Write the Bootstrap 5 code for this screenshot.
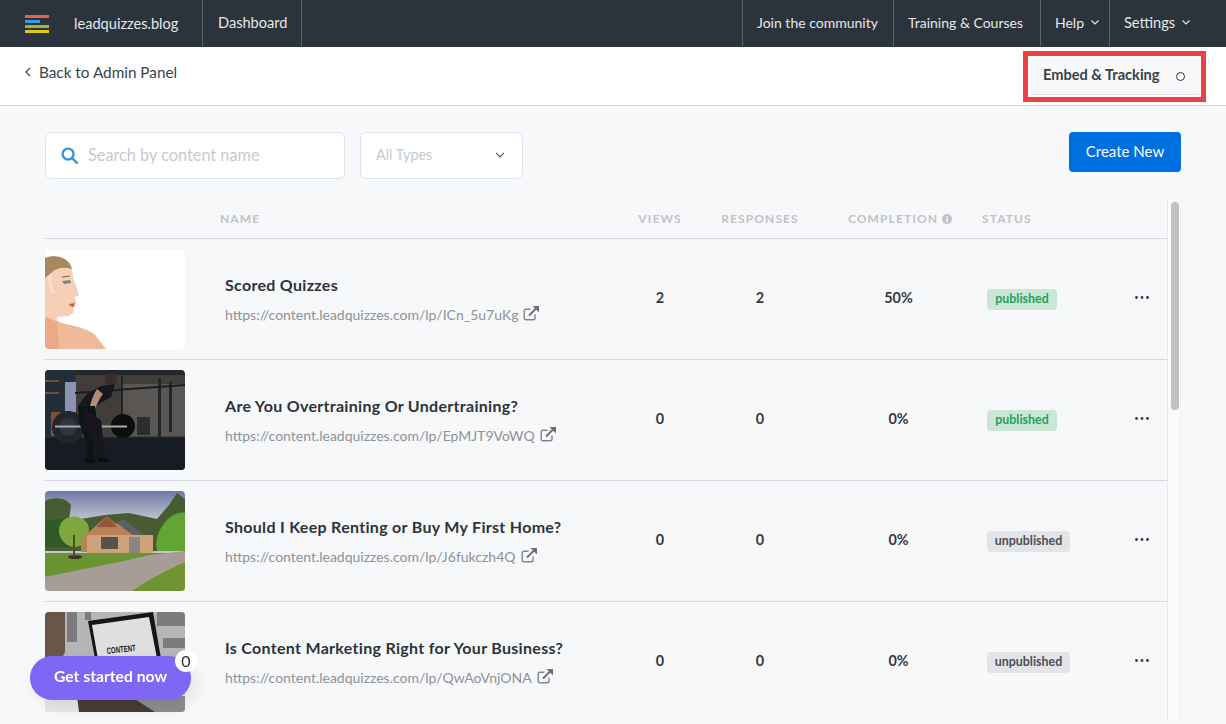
<!DOCTYPE html>
<html lang="en">
<head>
    <meta charset="UTF-8">
    <meta name="viewport" content="width=device-width, initial-scale=1.0">
    <title>LeadQuizzes Dashboard</title>
    <link href="https://cdn.jsdelivr.net/npm/bootstrap@5.3.2/dist/css/bootstrap.min.css" rel="stylesheet">
    <style>
        html, body { height: 100%; overflow: hidden; }
        body { font-family: "Lato", "Liberation Sans", sans-serif; background: #f7f8fa; color: #2b333c; font-size: 15px; }
        .lq-top { background: #2b333c; height: 47px; padding: 0; }
        .lq-brand { width: 203px; padding-left: 25px; gap: 25px; border-right: 1px solid #59616a; height: 47px; }
        .lq-logo { width: 24px; height: 18px; flex: none; }
        .lq-link { color: #e6e8ea; font-size: 14px; padding: 0 0 2px 14px; height: 47px; display: flex; align-items: center; text-decoration: none; border-right: 1px solid #59616a; white-space: nowrap; }
        .lq-link:hover { color: #fff; }
        .lq-wide { font-size: 14.6px; }
        .lq-w-dash { width: 99px; padding-left: 15px; }
        .lq-w-join { width: 152px; border-left: 1px solid #59616a; }
        .lq-w-train { width: 147px; }
        .lq-w-help { width: 69px; }
        .lq-w-set { width: 116px; border-right: 0; }
        .lq-caret { margin-left: 7px; }
        .lq-sub { background: #fff; height: 59px; border-bottom: 1px solid #d5dae0; padding: 15px 25px 0 25px; }
        .lq-back { color: #39424c; font-size: 15.3px; text-decoration: none; line-height: 20px; }
        .lq-embed { width: 172px; height: 38px; margin-top: -5px; background: #f7f8fa; border-radius: 4px; border-bottom: 1px solid #dfe2e6; padding: 0 14px 2px; font-size: 14.6px; font-weight: 700; color: #3a4047; }
        .lq-dot { width: 9px; height: 9px; border: 1px solid #2b333c; border-radius: 50%; background: #fff; margin: 3px 2px 0 0; }
        .lq-mark { position: absolute; left: 1023px; top: 51px; width: 183px; height: 51px; border: 5px solid #ef3e44; pointer-events: none; }
        .lq-tools { padding: 26px 45px 0; height: 94px; }
        .lq-search { width: 300px; height: 47px; background: #fff; border: 1px solid #dbe3ee; border-radius: 6px; padding-left: 15px; gap: 10px; }
        .lq-search input { border: 0; outline: 0; padding: 0; background: none; font-size: 16.3px; width: 240px; color: #2b333c; }
        .lq-search input::placeholder { color: #c6cad0; opacity: 1; }
        .lq-type { width: 163px; height: 47px; margin-left: 15px; background: #fff; border: 1px solid #dbe3ee; border-radius: 6px; padding: 0 17px 1px 15px; color: #c6cad0; font-size: 14.4px; }
        .lq-create { width: 112px; height: 40px; background: #0070e0; border: 0; border-radius: 4px; color: #fff; font-size: 15px; padding: 0 0 2px; }
        .lq-create:hover { background: #0063c7; color: #fff; }
        .lq-list { margin-left: 45px; width: 1136px; }
        .lq-rows { width: 1122px; }
        .lq-head { height: 39px; padding-bottom: 10px; border-bottom: 1px solid #d5d8e2; color: #bfc2c7; font-size: 12px; font-weight: 700; letter-spacing: 1.1px; }
        .lq-row { height: 121px; border-bottom: 1px solid #d5d8e2; }
        .lq-row:last-child { border-bottom-color: transparent; }
        .lq-thumb { width: 140px; height: 100px; flex: none; border-radius: 4px; overflow: hidden; background: #fff; display: block; }
        .lq-cname { width: 425px; padding: 2px 0 0 40px; flex: none; }
        .lq-cnum { width: 100px; flex: none; text-align: center; }
        .lq-cpct { width: 177px; flex: none; text-align: center; }
        .lq-cstatus { width: 130px; flex: none; }
        .lq-cmenu { width: 50px; flex: none; text-align: center; }
        .lq-row .lq-cnum, .lq-row .lq-cpct, .lq-row .lq-cstatus { padding-bottom: 2px; }
        .lq-row .lq-cmenu { padding-bottom: 4px; }
        .lq-title { font-size: 16px; font-weight: 700; letter-spacing: .3px; color: #2b333c; line-height: 20px; }
        .lq-url { font-size: 14px; color: #8e9299; line-height: 20px; margin-top: 10px; display: flex; align-items: center; gap: 5px; }
        .lq-ext { margin-bottom: 4px; }
        .lq-num { font-size: 14.4px; font-weight: 700; color: #33393f; }
        .lq-tag { font-size: 12.4px; font-weight: 700; padding: 0; height: 21px; display: inline-flex; align-items: center; border-radius: 4px; }
        .lq-pub { width: 70px; justify-content: center; background: #c9e6d6; color: #27a15c; }
        .lq-unpub { width: 83px; justify-content: center; background: #e3e4e7; color: #4c5056; }
        .lq-more { display: block; margin: 0 auto; }
        .lq-head .lq-cname { padding: 0 0 0 35px; }
        .lq-head .lq-cpct { padding-left: 3px; }
        .lq-head .lq-cstatus span { margin-left: -5px; display: block; }
        .lq-track { width: 14px; flex: none; height: 521px; background: #fafafa; border-left: 1px solid #e8e9ec; border-right: 1px solid #eeeff1; padding: 2px 2px 0 3px; }
        .lq-bar { width: 8px; height: 208px; background: #c1c1c1; border-radius: 4px; }
        .lq-started { position: fixed; left: 30px; top: 656px; width: 161px; height: 44px; border-radius: 22px; background: #7f66f5; color: #fff; font-weight: 700; font-size: 15.7px; border: 0; padding: 0 0 3px; box-shadow: 6px 6px 16px rgba(0,0,0,.08); }
        .lq-count { position: absolute; right: -6px; top: -6px; width: 22px; height: 22px; border-radius: 50%; background: #fff; color: #2b333c; font-size: 16px; font-weight: 400; display: flex; align-items: center; justify-content: center; }
    </style>
</head>
<body>

<nav class="navbar lq-top flex-nowrap justify-content-between align-items-stretch">
    <div class="d-flex">
        <a class="lq-brand d-flex align-items-center text-decoration-none" href="#">
            <svg class="lq-logo" viewBox="0 0 24 18">
                <rect y="0" width="24" height="3" fill="#e8604c"/>
                <rect y="5" width="15" height="3" fill="#3c9ae0"/>
                <rect y="10" width="24" height="3" fill="#a8b040"/>
                <rect y="15" width="24" height="3" fill="#dcc71c"/>
            </svg>
            <span class="lq-link lq-wide border-0 p-0">leadquizzes.blog</span>
        </a>
        <a class="lq-link lq-wide lq-w-dash" href="#">Dashboard</a>
    </div>
    <div class="d-flex">
        <a class="lq-link lq-w-join" href="#">Join the community</a>
        <a class="lq-link lq-w-train" href="#">Training &amp; Courses</a>
        <a class="lq-link lq-w-help" href="#">Help
            <svg class="lq-caret" width="8" height="5" viewBox="0 0 8 5" fill="none" stroke="#e6e8ea" stroke-width="1.1"><path d="M.5.5 4 4 7.5.5"/></svg></a>
        <a class="lq-link lq-wide lq-w-set" href="#">Settings
            <svg class="lq-caret" width="8" height="5" viewBox="0 0 8 5" fill="none" stroke="#e6e8ea" stroke-width="1.1"><path d="M.5.5 4 4 7.5.5"/></svg></a>
    </div>
</nav>

<div class="lq-sub d-flex justify-content-between align-items-start">
    <a class="lq-back d-flex align-items-center" href="#">
        <svg class="me-2" width="6" height="10" viewBox="0 0 6 10" fill="none" stroke="#39424c" stroke-width="1.2"><path d="M5 .8 1 5l4 4.2"/></svg>
        Back to Admin Panel
    </a>
    <div class="lq-embed d-flex align-items-center justify-content-between">
        <span>Embed &amp; Tracking</span>
        <span class="lq-dot"></span>
    </div>
</div>
<div class="lq-mark"></div>

<div class="lq-tools d-flex align-items-start">
    <label class="lq-search d-flex align-items-center mb-0">
        <svg width="17" height="17" viewBox="0 0 18 18" fill="none" stroke="#3c96de" stroke-width="2.6"><circle cx="7.5" cy="7.5" r="5.8"/><path d="m11.8 11.8 5 5" stroke-linecap="round"/></svg>
        <input type="text" placeholder="Search by content name">
    </label>
    <div class="lq-type d-flex align-items-center justify-content-between">
        <span>All Types</span>
        <svg width="10" height="6" viewBox="0 0 10 6" fill="none" stroke="#4c5560" stroke-width="1.2"><path d="M1 .8 5 4.8 9 .8"/></svg>
    </div>
    <button class="btn lq-create ms-auto" type="button">Create New</button>
</div>

<div class="lq-list d-flex">
    <div class="lq-rows">
        <div class="lq-head d-flex align-items-end">
            <div class="lq-thumb bg-transparent" style="height:auto"></div>
            <div class="lq-cname">NAME</div>
            <div class="lq-cnum">VIEWS</div>
            <div class="lq-cnum">RESPONSES</div>
            <div class="lq-cpct d-flex align-items-center justify-content-center gap-1">COMPLETION
                <svg width="10" height="10" viewBox="0 0 10 10"><circle cx="5" cy="5" r="5" fill="#bfc2c7"/><rect x="4.2" y="4.2" width="1.7" height="3.8" fill="#f7f8fa"/><rect x="4.2" y="2" width="1.7" height="1.5" fill="#f7f8fa"/></svg>
            </div>
            <div class="lq-cstatus"><span>STATUS</span></div>
            <div class="lq-cmenu"></div>
        </div>

        <div class="lq-row d-flex align-items-center">
            <svg class="lq-thumb" viewBox="0 0 140 100" preserveAspectRatio="none">
                <defs><filter id="soft" x="-5%" y="-5%" width="110%" height="110%"><feGaussianBlur stdDeviation=".5"/></filter></defs>
                <rect width="140" height="100" fill="#fff"/>
                <g filter="url(#soft)">
                    <path d="M0 9C10 5 24 8 27 20L28 28 31 37 34 46 30 48 31 54 28 58 29 63 24 67 12 68 12 72C22 77 40 77 50 86 55 91 57 96 62 100H0Z" fill="#f6d0b4"/>
                    <path d="M0 9C10 5 24 8 27 20C20 18 12 18 6 24 4 26 2 27 0 29Z" fill="#a88860"/>
                    <path d="M12 72C22 77 40 77 50 86L60 100H0V72Z" fill="#f0b999"/>
                    <path d="M0 68C6 70 10 72 12 72L14 100H0Z" fill="#eba987"/>
                    <path d="M17 32 25 31 26 34 19 35Z" fill="#76898a"/>
                    <path d="M17 28 25 27" stroke="#80603f" stroke-width="1"/>
                    <path d="M24 55 30 54 29 58 25 57Z" fill="#e0563f"/>
                    <path d="M5 28C4 34 6 40 9 44" stroke="#fdf3ea" stroke-width="3" stroke-dasharray="1 1.5" fill="none"/>
                </g>
            </svg>
            <div class="lq-cname">
                <div class="lq-title">Scored Quizzes</div>
                <div class="lq-url">https://content.leadquizzes.com/lp/ICn_5u7uKg
                    <svg class="lq-ext" width="16" height="15" viewBox="0 0 16 15"><path d="M12 8.5V12a1.8 1.8 0 0 1-1.8 1.8H3A1.8 1.8 0 0 1 1.2 12V5A1.8 1.8 0 0 1 3 3.2h4.5" fill="none" stroke="#808489" stroke-width="1.4"/><path d="M6 9.5 13 2.5" fill="none" stroke="#6d7177" stroke-width="2"/><path d="M9.5 0H16V6.5Z" fill="#6d7177"/></svg>
                </div>
            </div>
            <div class="lq-cnum lq-num">2</div>
            <div class="lq-cnum lq-num">2</div>
            <div class="lq-cpct lq-num">50%</div>
            <div class="lq-cstatus"><span class="badge lq-tag lq-pub">published</span></div>
            <div class="lq-cmenu"><svg class="lq-more" width="14" height="3" viewBox="0 0 14 3" fill="#33393f"><circle cx="1.5" cy="1.5" r="1.4"/><circle cx="7" cy="1.5" r="1.4"/><circle cx="12.5" cy="1.5" r="1.4"/></svg></div>
        </div>

        <div class="lq-row d-flex align-items-center">
            <svg class="lq-thumb" viewBox="0 0 140 100" preserveAspectRatio="none">
                <rect width="140" height="100" fill="#24282d"/>
                <g filter="url(#soft)">
                    <rect x="30" y="5" width="110" height="62" fill="#403d3b"/>
                    <rect x="76" y="14" width="64" height="52" fill="#5a5753"/>
                    <rect x="0" y="0" width="30" height="70" fill="#232e39"/>
                    <rect x="20" y="12" width="11" height="30" fill="#8c92b4"/>
                    <rect x="6" y="42" width="10" height="24" fill="#81503a"/>
                    <path d="M0 10h14v2H0zM0 22h14v2H0z" fill="#7a4a35"/>
                    <path d="M76 6h2v62h-2zM113 8h3v60h-3zM124 12h3v50h-3z" fill="#232527"/>
                    <path d="M30 22 140 14v2L30 24z" fill="#1d1f21"/>
                    <rect x="92" y="47" width="13" height="18" fill="#2c2e30"/>
                    <rect y="68" width="140" height="32" fill="#171d23"/>
                    <circle cx="23" cy="57" r="16" fill="#23252b"/>
                    <circle cx="23" cy="57" r="9" fill="#33363c"/>
                    <circle cx="78" cy="56" r="12" fill="#0b0b0c"/>
                    <rect x="10" y="55.5" width="72" height="2" fill="#a6aaae"/>
                    <circle cx="66" cy="9" r="6" fill="#3b2f2a"/>
                    <path d="M56 16 70 14 66 27 50 36 40 40 33 36 42 24Z" fill="#14161b"/>
                    <path d="M52 19C47 26 43 40 42 56L46 56C48 42 52 32 58 24Z" fill="#b38b75"/>
                    <path d="M33 36 50 36 52 52 49 72 48 90 42 90 41 72 34 52Z" fill="#101218"/>
                    <path d="M40 40 56 50 58 68 60 88 54 90 48 70 38 56Z" fill="#15171d"/>
                    <path d="M41 89h9v4H40zM53 88h9l4 4H53z" fill="#070809"/>
                </g>
            </svg>
            <div class="lq-cname">
                <div class="lq-title">Are You Overtraining Or Undertraining?</div>
                <div class="lq-url">https://content.leadquizzes.com/lp/EpMJT9VoWQ
                    <svg class="lq-ext" width="16" height="15" viewBox="0 0 16 15"><path d="M12 8.5V12a1.8 1.8 0 0 1-1.8 1.8H3A1.8 1.8 0 0 1 1.2 12V5A1.8 1.8 0 0 1 3 3.2h4.5" fill="none" stroke="#808489" stroke-width="1.4"/><path d="M6 9.5 13 2.5" fill="none" stroke="#6d7177" stroke-width="2"/><path d="M9.5 0H16V6.5Z" fill="#6d7177"/></svg>
                </div>
            </div>
            <div class="lq-cnum lq-num">0</div>
            <div class="lq-cnum lq-num">0</div>
            <div class="lq-cpct lq-num">0%</div>
            <div class="lq-cstatus"><span class="badge lq-tag lq-pub">published</span></div>
            <div class="lq-cmenu"><svg class="lq-more" width="14" height="3" viewBox="0 0 14 3" fill="#33393f"><circle cx="1.5" cy="1.5" r="1.4"/><circle cx="7" cy="1.5" r="1.4"/><circle cx="12.5" cy="1.5" r="1.4"/></svg></div>
        </div>

        <div class="lq-row d-flex align-items-center">
            <svg class="lq-thumb" viewBox="0 0 140 100" preserveAspectRatio="none">
                <defs><linearGradient id="houseSky" x1="0" y1="0" x2="0" y2="1"><stop offset="0" stop-color="#7078a5"/><stop offset=".3" stop-color="#c2c8cf"/></linearGradient></defs>
                <rect width="140" height="100" fill="url(#houseSky)"/>
                <g filter="url(#soft)">
                    <path d="M0 10C8 6 20 6 26 14L24 30 60 24 84 22 112 28 124 14 132 2 140 8V60H0Z" fill="#465c33"/>
                    <path d="M0 30 30 26 36 56H0Z" fill="#2e5a26"/>
                    <path d="M16 32c7-9 20-8 26 0 5 8 0 24-12 24S10 42 16 32Z" fill="#7ea83e"/>
                    <path d="M118 34c6-9 16-14 22-12v38h-28c-2-8 0-18 6-26Z" fill="#63a530"/>
                    <path d="M36 48 62 25l9 8 6-4 24 20 8 12H36Z" fill="#bb8055"/>
                    <path d="M62 25 72 36H52Z" fill="#96543a"/>
                    <path d="M78 28 102 46 90 46 72 32Z" fill="#5b5f66"/>
                    <rect x="42" y="44" width="66" height="18" fill="#cfa27c"/>
                    <rect x="56" y="46" width="17" height="12" fill="#57524c"/>
                    <rect x="84" y="46" width="11" height="17" fill="#8a857e"/>
                    <path d="M0 62h140v14H0Z" fill="#638e2e"/>
                    <path d="M0 62h110v8L0 86Z" fill="#6a9430"/>
                    <path d="M0 86C40 78 80 70 105 64L140 60V72C120 80 100 90 87 100H0Z" fill="#a89c96"/>
                    <path d="M87 100C100 90 120 80 140 71V100Z" fill="#6f9431"/>
                    <ellipse cx="30" cy="66" rx="7" ry="2" fill="#3a3224"/>
                    <rect x="28" y="44" width="2" height="22" fill="#5a4a33"/>
                </g>
            </svg>
            <div class="lq-cname">
                <div class="lq-title">Should I Keep Renting or Buy My First Home?</div>
                <div class="lq-url">https://content.leadquizzes.com/lp/J6fukczh4Q
                    <svg class="lq-ext" width="16" height="15" viewBox="0 0 16 15"><path d="M12 8.5V12a1.8 1.8 0 0 1-1.8 1.8H3A1.8 1.8 0 0 1 1.2 12V5A1.8 1.8 0 0 1 3 3.2h4.5" fill="none" stroke="#808489" stroke-width="1.4"/><path d="M6 9.5 13 2.5" fill="none" stroke="#6d7177" stroke-width="2"/><path d="M9.5 0H16V6.5Z" fill="#6d7177"/></svg>
                </div>
            </div>
            <div class="lq-cnum lq-num">0</div>
            <div class="lq-cnum lq-num">0</div>
            <div class="lq-cpct lq-num">0%</div>
            <div class="lq-cstatus"><span class="badge lq-tag lq-unpub">unpublished</span></div>
            <div class="lq-cmenu"><svg class="lq-more" width="14" height="3" viewBox="0 0 14 3" fill="#33393f"><circle cx="1.5" cy="1.5" r="1.4"/><circle cx="7" cy="1.5" r="1.4"/><circle cx="12.5" cy="1.5" r="1.4"/></svg></div>
        </div>

        <div class="lq-row d-flex align-items-center">
            <svg class="lq-thumb" viewBox="0 0 140 100" preserveAspectRatio="none">
                <rect width="140" height="100" fill="#b5b5b6"/>
                <g filter="url(#soft)">
                    <path d="M0 0h20v40l-8 16H0Z" fill="#6a5648"/>
                    <path d="M22 0h10v30H22zM40 0h6v8h-6zM112 0h28v14h-28zM118 26h22v10h-22z" fill="#7c7c7e"/>
                    <path d="M43 9 108 0 120 70 56 78Z" fill="#131518"/>
                    <path d="M47 13 104 5 115 62 57 70Z" fill="#dfdfdd"/>
                    <rect y="82" width="140" height="18" fill="#e6e6e7"/>
                    <path d="M32 84h60l24 16H34Z" fill="#4a3a30"/>
                    <path d="M85 84h55v16h-30Z" fill="#8d8d90"/>
                </g>
                <text x="62" y="42" font-family="Liberation Sans" font-size="9" font-weight="700" fill="#1d1d1f" textLength="29" lengthAdjust="spacingAndGlyphs" transform="rotate(-6 62 42)">CONTENT</text>
            </svg>
            <div class="lq-cname">
                <div class="lq-title">Is Content Marketing Right for Your Business?</div>
                <div class="lq-url">https://content.leadquizzes.com/lp/QwAoVnjONA
                    <svg class="lq-ext" width="16" height="15" viewBox="0 0 16 15"><path d="M12 8.5V12a1.8 1.8 0 0 1-1.8 1.8H3A1.8 1.8 0 0 1 1.2 12V5A1.8 1.8 0 0 1 3 3.2h4.5" fill="none" stroke="#808489" stroke-width="1.4"/><path d="M6 9.5 13 2.5" fill="none" stroke="#6d7177" stroke-width="2"/><path d="M9.5 0H16V6.5Z" fill="#6d7177"/></svg>
                </div>
            </div>
            <div class="lq-cnum lq-num">0</div>
            <div class="lq-cnum lq-num">0</div>
            <div class="lq-cpct lq-num">0%</div>
            <div class="lq-cstatus"><span class="badge lq-tag lq-unpub">unpublished</span></div>
            <div class="lq-cmenu"><svg class="lq-more" width="14" height="3" viewBox="0 0 14 3" fill="#33393f"><circle cx="1.5" cy="1.5" r="1.4"/><circle cx="7" cy="1.5" r="1.4"/><circle cx="12.5" cy="1.5" r="1.4"/></svg></div>
        </div>
    </div>
    <div class="lq-track"><div class="lq-bar"></div></div>
</div>

<button class="lq-started" type="button">Get started now<span class="lq-count">0</span></button>

<script src="https://cdn.jsdelivr.net/npm/bootstrap@5.3.2/dist/js/bootstrap.bundle.min.js"></script>
</body>
</html>
